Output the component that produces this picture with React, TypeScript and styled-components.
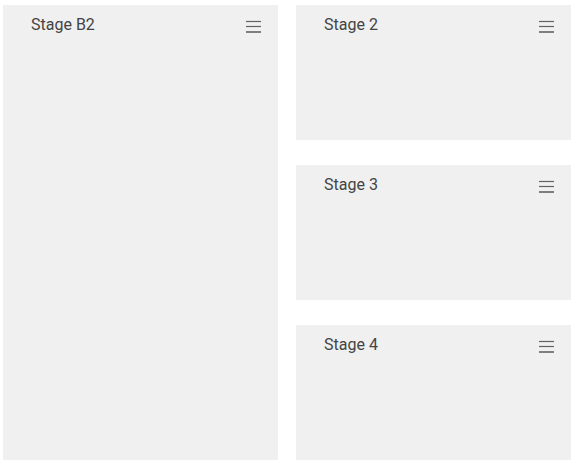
import styled, { createGlobalStyle } from "styled-components";

const GlobalStyle = createGlobalStyle`
    body {
        margin: 0;
        background: #ffffff;
        font-family: Roboto, "Noto Sans", sans-serif;
    }
`;

const Board = styled.div`
    display: grid;
    grid-template-columns: 275px 275px;
    grid-template-rows: repeat(3, 135px);
    column-gap: 18px;
    row-gap: 25px;
    padding: 5px 0 0 3px;
`;

const Panel = styled.section<{ $tall?: boolean }>`
    background: #f0f0f0;
    grid-row: ${p => (p.$tall ? "1 / span 3" : "auto")};
    display: flex;
    flex-direction: column;
`;

const Header = styled.div`
    display: flex;
    align-items: center;
    justify-content: space-between;
    padding: 8px 17px 0 28px;
    height: 24px;
`;

const Title = styled.span`
    font-size: 16px;
    line-height: 24px;
    color: #444;
`;

const MenuButton = styled.button`
    border: 0;
    background: none;
    padding: 0;
    margin-top: 3px;
    display: flex;
    cursor: pointer;
    color: #333;
`;

const MenuIcon = () => (
    <svg width="15" height="13" viewBox="0 0 15 13">
        <g stroke="currentColor" strokeWidth="1.2">
            <line x1="0" y1="1.5" x2="15" y2="1.5" opacity="0.75" />
            <line x1="0" y1="6.5" x2="15" y2="6.5" opacity="0.75" />
            <line x1="0" y1="12" x2="15" y2="12" />
        </g>
    </svg>
);

const stages = [
    { id: "b2", title: "Stage B2", tall: true },
    { id: "2", title: "Stage 2" },
    { id: "3", title: "Stage 3" },
    { id: "4", title: "Stage 4" },
];

const App = () => (
    <>
        <GlobalStyle />
        <Board>
            {stages.map(s => (
                <Panel key={s.id} $tall={s.tall}>
                    <Header>
                        <Title>{s.title}</Title>
                        <MenuButton aria-label="menu">
                            <MenuIcon />
                        </MenuButton>
                    </Header>
                </Panel>
            ))}
        </Board>
    </>
);

export default App;
